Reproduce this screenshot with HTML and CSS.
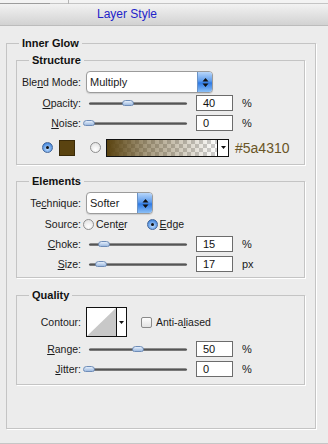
FILE: index.html
```html
<!DOCTYPE html>
<html lang="en">

<head>
  <meta charset="UTF-8">
  <meta name="viewport" content="width=device-width, initial-scale=1.0">
  <title>Layer Style | Inner Glow</title>
  <link rel="stylesheet" href="styles.css">
</head>

<body>
  <div class="topstrip">
    <div class="tab"></div>
    <div class="tick"></div>
  </div>
  <div class="titlebar">Layer Style</div>

  <fieldset class="group outer">
    <legend>Inner Glow</legend>

    <fieldset class="group">
      <legend>Structure</legend>
      <div class="row row-select">
        <span class="lbl">Ble<u>n</u>d Mode:</span>
        <div class="select select-wide">
          <span class="select-text">Multiply</span>
          <span class="select-btn"><svg width="7" height="11" viewBox="0 0 7 11"><path d="M3.5 1 L6.5 4.5 H0.5 Z M3.5 10 L6.5 6.5 H0.5 Z" fill="#111"/></svg></span>
        </div>
      </div>
      <div class="row">
        <span class="lbl"><u>O</u>pacity:</span>
        <div class="slider" style="--v: .40"><span class="thumb"></span></div>
        <div class="num">40</div>
        <span class="unit">%</span>
      </div>
      <div class="row">
        <span class="lbl"><u>N</u>oise:</span>
        <div class="slider" style="--v: 0"><span class="thumb"></span></div>
        <div class="num">0</div>
        <span class="unit">%</span>
      </div>
      <div class="row row-color">
        <span class="radio checked"></span>
        <span class="swatch"></span>
        <span class="radio second"></span>
        <div class="gradient">
          <span class="gradient-fill"></span>
          <span class="gradient-btn"><svg width="5" height="3" viewBox="0 0 5 3"><path d="M0 0 H5 L2.5 3 Z" fill="#111"/></svg></span>
        </div>
        <span class="hex">#5a4310</span>
      </div>
    </fieldset>

    <fieldset class="group">
      <legend>Elements</legend>
      <div class="row row-select">
        <span class="lbl">Te<u>c</u>hnique:</span>
        <div class="select select-short">
          <span class="select-text">Softer</span>
          <span class="select-btn"><svg width="7" height="11" viewBox="0 0 7 11"><path d="M3.5 1 L6.5 4.5 H0.5 Z M3.5 10 L6.5 6.5 H0.5 Z" fill="#111"/></svg></span>
        </div>
      </div>
      <div class="row">
        <span class="lbl">Source:</span>
        <span class="radio source-first"></span>
        <span class="opt">Cent<u>e</u>r</span>
        <span class="radio checked source-second"></span>
        <span class="opt"><u>E</u>dge</span>
      </div>
      <div class="row">
        <span class="lbl"><u>C</u>hoke:</span>
        <div class="slider" style="--v: .15"><span class="thumb"></span></div>
        <div class="num">15</div>
        <span class="unit">%</span>
      </div>
      <div class="row">
        <span class="lbl"><u>S</u>ize:</span>
        <div class="slider" style="--v: .12"><span class="thumb"></span></div>
        <div class="num">17</div>
        <span class="unit">px</span>
      </div>
    </fieldset>

    <fieldset class="group quality">
      <legend>Quality</legend>
      <div class="row row-contour">
        <span class="lbl">Contour:</span>
        <div class="contour">
          <svg class="contour-preview" width="29" height="28" viewBox="0 0 29 28"><path d="M0 28 L29 0 V28 Z" fill="#c8c8c8"/></svg>
          <span class="contour-btn"><svg width="5" height="3" viewBox="0 0 5 3"><path d="M0 0 H5 L2.5 3 Z" fill="#111"/></svg></span>
        </div>
        <span class="checkbox"></span>
        <span class="opt">Anti-a<u>l</u>iased</span>
      </div>
      <div class="row row-range">
        <span class="lbl"><u>R</u>ange:</span>
        <div class="slider" style="--v: .50"><span class="thumb"></span></div>
        <div class="num">50</div>
        <span class="unit">%</span>
      </div>
      <div class="row row-jitter">
        <span class="lbl"><u>J</u>itter:</span>
        <div class="slider" style="--v: 0"><span class="thumb"></span></div>
        <div class="num">0</div>
        <span class="unit">%</span>
      </div>
    </fieldset>
  </fieldset>

  <div class="footer"></div>
</body>

</html>
```

FILE: styles.css
```css
body,
html {
  margin: 0;
  padding: 0;
  background: #ececec;
  font-family: 'Liberation Sans', Arial, sans-serif;
  font-size: 10.5px;
  color: #1a1a1a;
  overflow: hidden;
}

u {
  text-decoration: underline;
  text-underline-offset: 1px;
}

/* window chrome */
.topstrip {
  height: 4px;
  display: flex;
  background: #f3f3f3;
}

.tab {
  width: 50px;
  height: 3px;
  border-bottom: 1px solid #9c9c9c;
}

.tick {
  margin-left: 18px;
  width: 1px;
  height: 4px;
  background: #b4b4b4;
}

.titlebar {
  height: 21px;
  line-height: 21px;
  padding-left: 97px;
  font-size: 12px;
  color: #2323c9;
  background: linear-gradient(#f2f2f2, #d2d2d2);
  border-top: 1px solid #c4c4c4;
  border-bottom: 1px solid #bcbcbc;
  margin-top: -1px;
}

.footer {
  height: 14px;
  border-bottom: 1px solid #c6c6c6;
}

/* group boxes */
.group {
  margin: 9px 10px 0 9px;
  padding: 4px 0 3px 0;
  border: 1px solid #c4c4c4;
  box-shadow: 1px 1px 0 #fff;
  min-inline-size: 0;
}

.group legend {
  margin-left: 12px;
  padding: 0 3px;
  font-size: 11px;
  line-height: 14px;
  font-weight: bold;
  color: #111;
}

.outer {
  margin: 10px 12px 0 6px;
  padding: 0 0 43px 0;
}

.outer > .group:first-of-type {
  margin-top: 3px;
  padding-bottom: 2px;
}

.quality {
  margin-top: 10px;
  padding-bottom: 6px;
}

/* rows */
.row {
  height: 20px;
  display: flex;
  align-items: center;
}

.row-select {
  height: 22px;
}

.row-color {
  height: 29px;
}

.row-contour {
  height: 32px;
}

.row-range {
  height: 22px;
}

.row-jitter {
  height: 18px;
}

.lbl {
  width: 64px;
  margin-right: 5px;
  text-align: right;
  white-space: nowrap;
}

/* popup menus */
.select {
  height: 20px;
  display: flex;
  align-items: center;
  background: #fff;
  border: 1px solid #9b9b9b;
  border-radius: 4px;
  box-shadow: 0 1px 1px rgba(0, 0, 0, 0.12);
  overflow: hidden;
}

.select-wide {
  width: 125px;
}

.select-short {
  width: 65px;
}

.select-text {
  flex: 1;
  padding-left: 3px;
  font-size: 11px;
}

.select-btn {
  width: 14px;
  height: 20px;
  display: flex;
  align-items: center;
  justify-content: center;
  background: linear-gradient(#b8d6fa, #5e9cec 45%, #2f7ae4 55%, #8cc0f6);
  border-left: 1px solid #6b93c6;
}

/* sliders */
.slider {
  position: relative;
  width: 104px;
  height: 10px;
}

.slider::before {
  content: "";
  position: absolute;
  left: 3px;
  right: 3px;
  top: 4px;
  height: 3px;
  border-radius: 2px;
  background: linear-gradient(#a8a8a8, #555 50%, #8c8c8c);
}

.thumb {
  position: absolute;
  top: 2px;
  left: calc(3px + var(--v) * 98px - 6px);
  width: 12px;
  height: 6px;
  border: 1px solid #6f8db8;
  border-radius: 6px 6px 4px 4px;
  box-sizing: border-box;
  background: linear-gradient(#e4eefb, #9fbbe0);
}

.num {
  width: 37px;
  height: 16px;
  margin-left: 6px;
  box-sizing: border-box;
  padding-left: 6px;
  line-height: 14px;
  font-size: 11px;
  background: #fff;
  border: 1px solid #6c6c6c;
  color: #111;
}

.unit {
  margin-left: 9px;
  font-size: 11px;
}

/* radio buttons and check box */
.radio {
  width: 11px;
  height: 11px;
  box-sizing: border-box;
  border: 1px solid #8f8f8f;
  border-radius: 50%;
  background: radial-gradient(circle at 50% 70%, #fff, #dcdcdc);
  position: relative;
}

.radio.checked {
  border-color: #44679a;
  background: radial-gradient(circle at 50% 65%, #c4e0ff, #4f8fe0 70%, #2c64b8);
}

.radio.checked::after {
  content: "";
  position: absolute;
  left: 3px;
  top: 3px;
  width: 3px;
  height: 3px;
  border-radius: 50%;
  background: #111;
}

.row-color .radio.checked {
  margin-left: 25px;
}

.radio.second {
  margin-left: 15px;
}

.source-first {
  margin-left: -3px;
}

.source-second {
  margin-left: 19px;
}

.opt {
  margin-left: 2px;
  white-space: nowrap;
}

.checkbox {
  width: 11px;
  height: 11px;
  margin-left: 14px;
  margin-right: 2px;
  box-sizing: border-box;
  border: 1px solid #8a8a8a;
  border-radius: 2px;
  background: linear-gradient(#fdfdfd, #e2e2e2);
}

/* color row */
.swatch {
  width: 16px;
  height: 16px;
  margin-left: 6px;
  box-sizing: border-box;
  background: #5a4310;
  border: 1px solid #3a2a08;
}

.gradient {
  width: 123px;
  height: 18px;
  margin-left: 5px;
  display: flex;
  box-sizing: border-box;
  border: 1px solid #111;
}

.gradient-fill {
  flex: 1;
  background:
    linear-gradient(to right, #5a4310, rgba(90, 67, 16, 0.55) 35%, rgba(90, 67, 16, 0)),
    repeating-conic-gradient(#cfcfcf 0 25%, #fff 0 50%) 0 0 / 8px 8px;
}

.gradient-btn {
  width: 10px;
  display: flex;
  align-items: center;
  justify-content: center;
  background: #fff;
  border-left: 1px solid #111;
}

.hex {
  margin-left: 6px;
  font-size: 14px;
  color: #6a5526;
}

/* contour picker */
.contour {
  width: 41px;
  height: 30px;
  display: flex;
  box-sizing: border-box;
  border: 1px solid #111;
  background: #fff;
}

.contour-preview {
  display: block;
}

.contour-btn {
  flex: 1;
  display: flex;
  align-items: center;
  justify-content: center;
  border-left: 1px solid #111;
}
```
